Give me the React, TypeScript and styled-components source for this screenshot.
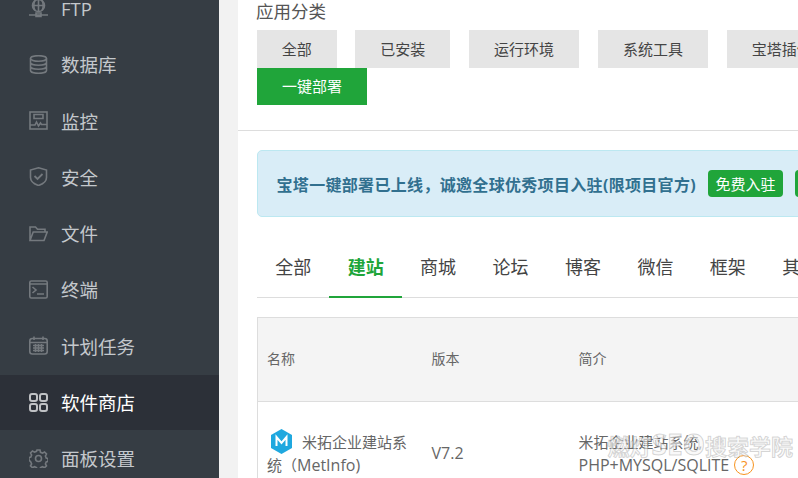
import React from "react";
import styled, { createGlobalStyle } from "styled-components";

const GlobalStyle = createGlobalStyle`
  html, body {
    margin: 0;
    padding: 0;
    height: 100%;
    background: #f2f2f2;
    overflow: hidden;
  }
  body {
    font-family: "Open Sans", "Noto Sans CJK SC", sans-serif;
  }
  * {
    box-sizing: border-box;
  }
`;

const Page = styled.div`
  position: relative;
  display: flex;
  width: 798px;
  height: 478px;
  overflow: hidden;
`;

const Sidebar = styled.nav`
  flex: 0 0 219px;
  background: #363d44;
  overflow: hidden;
`;

const MenuList = styled.ul`
  list-style: none;
  margin: -19px 0 0;
  padding: 0;
  display: flex;
  flex-direction: column;
  gap: 1.3px;
`;

const MenuItem = styled.li<{ $active?: boolean }>`
  display: flex;
  align-items: center;
  gap: 13px;
  flex: 0 0 55px;
  padding: 0 0 1px 29px;
  font-size: 18.5px;
  color: ${(p) => (p.$active ? "#ffffff" : "#c4c8cc")};
  background: ${(p) => (p.$active ? "#2c3038" : "transparent")};

  svg {
    flex: 0 0 19px;
    width: 19px;
    height: 19px;
    fill: none;
    stroke: ${(p) => (p.$active ? "#bfc1c4" : "#74797e")};
    stroke-width: 1.6;
  }
`;

const Main = styled.main`
  flex: 0 0 560px;
  margin-left: 19px;
  background: #ffffff;
  overflow: hidden;
`;

const CategoryPanel = styled.section`
  height: 131px;
  padding-left: 19px;
  border-bottom: 1px solid #dddddd;
`;

const PanelTitle = styled.h2`
  margin: 0 0 0 -1px;
  height: 30px;
  font-size: 17.5px;
  line-height: 23px;
  font-weight: 400;
  color: #555555;
`;

const CategoryGrid = styled.div`
  display: flex;
  flex-wrap: wrap;
  column-gap: 18.8px;
  width: 600px;
`;

const CategoryButton = styled.button<{ $primary?: boolean; $wide?: boolean }>`
  width: ${(p) => (p.$wide ? "95px" : "110px")};
  height: ${(p) => (p.$primary ? "37px" : "38px")};
  padding: 0 0 2px;
  border: 0;
  font-family: inherit;
  font-size: 15px;
  color: ${(p) => (p.$primary ? "#ffffff" : "#444444")};
  background: ${(p) => (p.$primary ? "#20a53a" : "#e5e5e5")};
`;

const ShortButton = styled(CategoryButton)`
  width: 79.5px;
`;

const Content = styled.section`
  padding: 19px 0 0 19px;
`;

const Notice = styled.div`
  display: flex;
  align-items: center;
  width: 700px;
  height: 67px;
  padding-left: 18.5px;
  background: #d9edf7;
  border: 1px solid #bce8f1;
  border-radius: 5px;
  color: #31708f;
  font-size: 16px;
  font-weight: 700;
  letter-spacing: 0.32px;
`;

const NoticeButton = styled.a`
  display: flex;
  align-items: center;
  justify-content: center;
  flex: 0 0 75px;
  height: 27px;
  margin-left: 12px;
  background: #20a53a;
  border-radius: 4px;
  color: #ffffff;
  font-size: 15px;
  font-weight: 400;
  letter-spacing: 0;
`;

const Tabs = styled.div`
  display: flex;
  width: 600px;
  height: 61px;
  margin-top: 20px;
  border-bottom: 1px solid #dddddd;
`;

const Tab = styled.div<{ $active?: boolean }>`
  flex: 0 0 72.45px;
  height: 61px;
  text-align: center;
  font-size: 18px;
  line-height: 60px;
  font-weight: ${(p) => (p.$active ? 700 : 400)};
  color: ${(p) => (p.$active ? "#20a53a" : "#444444")};
  border-bottom: 2px solid ${(p) => (p.$active ? "#20a53a" : "transparent")};
`;

const Table = styled.table`
  width: 620px;
  margin-top: 19px;
  border-collapse: collapse;
  table-layout: fixed;
  border: 1px solid #dddddd;
  font-size: 15px;
  color: #666666;
`;

const HeadCell = styled.th<{ $width: number }>`
  width: ${(p) => p.$width}px;
  height: 84px;
  padding: 0 10px 3px 9px;
  text-align: left;
  font-size: 14px;
  font-weight: 400;
  background: #f4f4f4;
  border-bottom: 1px solid #dddddd;
`;

const BodyCell = styled.td`
  height: 104px;
  padding: 27px 10px 0 9px;
  vertical-align: top;
  line-height: 22.5px;
`;

const VersionCell = styled(BodyCell)`
  padding-top: 40px;
`;

const IntroCell = styled(BodyCell)`
  padding-top: 29px;
`;

const LatinText = styled.span`
  font-size: 16px;
`;

const AppLogo = styled.svg`
  width: 21px;
  height: 25px;
  margin: 0 10px 0 4px;
  vertical-align: -6px;
`;

const HelpMark = styled.span`
  display: inline-flex;
  align-items: center;
  justify-content: center;
  width: 20px;
  height: 20px;
  margin: -4px 0 -4px 5px;
  border: 1px solid #f7931e;
  border-radius: 50%;
  color: #f7931e;
  font-size: 15px;
  line-height: 1;
  vertical-align: 0;
`;

const Watermark = styled.div`
  position: absolute;
  right: 5px;
  top: 428px;
  font-size: 22px;
  line-height: 32px;
  font-weight: 700;
  white-space: nowrap;
  color: rgba(245, 245, 245, 0.6);
  -webkit-text-stroke: 1px rgba(130, 130, 130, 0.32);
`;

const WatermarkLatin = styled.span`
  font-size: 28px;
`;

const menu: Array<{ name: string; icon: React.ReactNode; active?: boolean }> = [
  {
    name: "FTP",
    icon: (
      <>
        <circle cx="9.5" cy="6.5" r="6" />
        <path d="M3.5 6.5h12M9.5.5v12M6 1.5c-1.5 3-1.5 7 0 10M13 1.5c1.5 3 1.5 7 0 10" />
        <path d="M0 16h19M7 14h5v3.5H7z" />
      </>
    ),
  },
  {
    name: "数据库",
    icon: (
      <>
        <ellipse cx="9.5" cy="3.5" rx="8" ry="2.8" />
        <path d="M1.5 3.5v12c0 1.6 3.6 2.8 8 2.8s8-1.2 8-2.8v-12M1.5 7.5c0 1.6 3.6 2.8 8 2.8s8-1.2 8-2.8M1.5 11.5c0 1.6 3.6 2.8 8 2.8s8-1.2 8-2.8" />
      </>
    ),
  },
  {
    name: "监控",
    icon: (
      <>
        <rect x="1" y="1" width="17" height="17" />
        <path d="M5 3.5h9v4H5zM1 14h5l1.5-3 2 4 2-3 1 1.5H18" />
      </>
    ),
  },
  {
    name: "安全",
    icon: (
      <>
        <path d="M9.5.8l8 2.2v7.5c0 3.7-3.5 6.5-8 8-4.5-1.5-8-4.3-8-8V3z" />
        <path d="M5.5 9l3 3 5-5" strokeWidth="1.8" />
      </>
    ),
  },
  {
    name: "文件",
    icon: <path d="M1 16.5V3h5.500l2 2.200H16V8M1 16.500h14l3.200-8.500H4.200z" />,
  },
  {
    name: "终端",
    icon: (
      <>
        <rect x=".8" y="1" width="17.4" height="17" rx="1.5" />
        <path d="M1 4h17M3.500 7l3.500 3-3.500 3M8 14h7" />
      </>
    ),
  },
  {
    name: "计划任务",
    icon: (
      <>
        <rect x=".8" y="2.5" width="17.4" height="15.5" rx="2.5" />
        <path d="M1 6.500h17M5 .5v3.500M14 .5v3.500M4 9.500h11M4 12h11M4 14.500h11M6.500 8v8M9.500 8v8M12.500 8v8" />
      </>
    ),
  },
  {
    name: "软件商店",
    active: true,
    icon: (
      <g strokeWidth="2">
        <rect x="1" y="1" width="7" height="7" rx="2" />
        <rect x="11" y="1" width="7" height="7" rx="2" />
        <rect x="1" y="11" width="7" height="7" rx="2" />
        <rect x="11" y="11" width="7" height="7" rx="2" />
      </g>
    ),
  },
  {
    name: "面板设置",
    icon: (
      <>
        <circle cx="9.5" cy="9.5" r="3" />
        <path d="M8 1h3l.5 2.300 2 .8 2-1.100 2 2-1.100 2 .8 2 1.800.5v3l-1.800.5-.8 2 1.100 1.800-2 2-2-1.100-2 .8-.5 1.500H8l-.5-1.500-2-.8-2 1.100-2-2 1.100-1.800-.8-2L0 11V8.500l1.800-.5.800-2-1.100-2 2-2 2 1.100 2-.8z" />
      </>
    ),
  },
];

const tabs = ["全部", "建站", "商城", "论坛", "博客", "微信", "框架", "其他"];

const App: React.FunctionComponent = () => {
  return (
    <Page>
      <GlobalStyle />
      <Sidebar>
        <MenuList>
          {menu.map((item) => (
            <MenuItem key={item.name} $active={item.active}>
              <svg viewBox="0 0 19 19">{item.icon}</svg>
              {item.name}
            </MenuItem>
          ))}
        </MenuList>
      </Sidebar>
      <Main>
        <CategoryPanel>
          <PanelTitle>应用分类</PanelTitle>
          <CategoryGrid>
            <ShortButton>全部</ShortButton>
            <CategoryButton $wide>已安装</CategoryButton>
            <CategoryButton>运行环境</CategoryButton>
            <CategoryButton>系统工具</CategoryButton>
            <CategoryButton>宝塔插件</CategoryButton>
            <CategoryButton $primary>一键部署</CategoryButton>
          </CategoryGrid>
        </CategoryPanel>
        <Content>
          <Notice>
            宝塔一键部署已上线，诚邀全球优秀项目入驻(限项目官方)
            <NoticeButton>免费入驻</NoticeButton>
            <NoticeButton>查看详情</NoticeButton>
          </Notice>
          <Tabs>
            {tabs.map((tab) => (
              <Tab key={tab} $active={tab === "建站"}>
                {tab}
              </Tab>
            ))}
          </Tabs>
          <Table>
            <thead>
              <tr>
                <HeadCell $width={165}>名称</HeadCell>
                <HeadCell $width={147}>版本</HeadCell>
                <HeadCell $width={308}>简介</HeadCell>
              </tr>
            </thead>
            <tbody>
              <tr>
                <BodyCell>
                  <AppLogo viewBox="0 0 21 25">
                    <path d="M10.5 0L21 6v13l-10.500 6L0 19V6z" fill="#1fa8df" />
                    <path d="M5.500 17V8l5 6 5-6v9" fill="none" stroke="#ffffff" strokeWidth="2" />
                  </AppLogo>
                  米拓企业建站系统（<LatinText>MetInfo)</LatinText>
                </BodyCell>
                <VersionCell>
                  <LatinText>V7.2</LatinText>
                </VersionCell>
                <IntroCell>
                  米拓企业建站系统,
                  <br />
                  <LatinText>PHP+MYSQL/SQLITE</LatinText>
                  <HelpMark>?</HelpMark>
                </IntroCell>
              </tr>
            </tbody>
          </Table>
        </Content>
      </Main>
      <Watermark>
        燃灯<WatermarkLatin>SEO</WatermarkLatin>搜索学院
      </Watermark>
    </Page>
  );
};

export default App;
